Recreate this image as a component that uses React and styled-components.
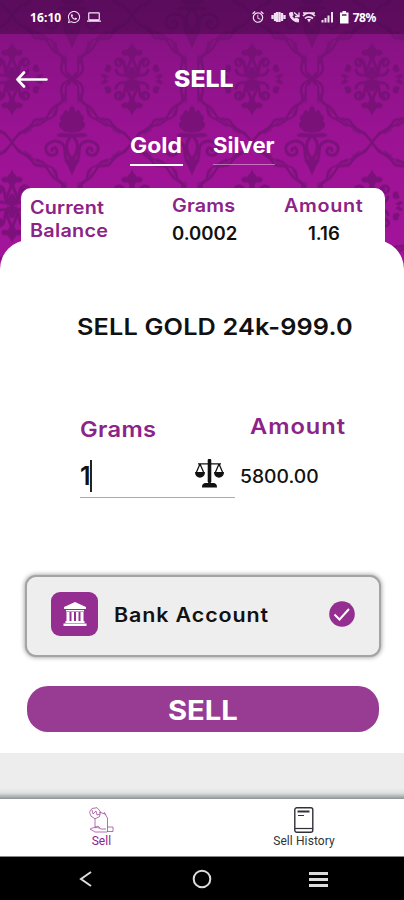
import React from "react";
import styled, { createGlobalStyle } from "styled-components";
import { FaWhatsapp } from "react-icons/fa";
import { MdAlarm, MdLaptop } from "react-icons/md";

const PURPLE = "#8c2387";
const BRAND = "#983b93";
const MOTIF = "#6f1070";

const GlobalStyle = createGlobalStyle`
  * { box-sizing: border-box; }
  html, body { margin: 0; background: #fff; }
  body { font-family: Inter, "Liberation Sans", sans-serif; }
`;

const Screen = styled.main`
  width: 404px;
  height: 900px;
  display: flex;
  flex-direction: column;
  overflow: hidden;
  background: #fff;
`;

const Header = styled.header`
  position: relative;
  isolation: isolate;
  height: 270px;
  flex: none;
  display: flex;
  flex-direction: column;
`;

const Damask = styled.svg`
  position: absolute;
  inset: 0;
  z-index: -1;
  display: block;
`;

const StatusBar = styled.div`
  height: 34px;
  padding: 0 28px 0 30px;
  display: flex;
  justify-content: space-between;
  align-items: center;
  color: #f5e6f5;
  background: rgba(45, 5, 50, 0.42);
`;

const StatusGroup = styled.div`
  display: flex;
  align-items: center;
  gap: ${(p) => p.$gap}px;
  svg { display: block; flex: none; }
`;

const StatusText = styled.span`
  font: 700 12px/34px "Noto Sans", sans-serif;
  letter-spacing: ${(p) => p.$track || 0}px;
  padding-top: 1px;
  color: #fff;
`;

/* Wide geometric lettering: the glyphs are stretched from the left edge. */
const Label = styled.span`
  display: block;
  white-space: nowrap;
  transform-origin: 0 50%;
  transform: scaleX(${(p) => p.$wide || 1.1});
  font-size: ${(p) => p.$size}px;
  line-height: ${(p) => p.$line || 24}px;
  font-weight: ${(p) => p.$weight || 600};
  letter-spacing: ${(p) => p.$track || 0}px;
  color: ${(p) => p.$color || "#111"};
`;

const TitleRow = styled.div`
  height: 90px;
  display: grid;
  grid-template-columns: 158px 1fr;
  align-items: center;
  padding-left: 16px;
`;

const Tabs = styled.nav`
  display: grid;
  grid-template-columns: 53px 62px;
  column-gap: 30px;
  padding-left: 130px;
  height: 64px;
`;

const Tab = styled.div`
  height: ${(p) => (p.$active ? 42 : 41)}px;
  padding-top: 10px;
  border-bottom: ${(p) => (p.$active ? "2px solid #fff" : "1px solid rgba(255,255,255,.4)")};
`;

const BalanceCard = styled.section`
  margin: 0 19px 0 21px;
  height: 60px;
  padding: 8px 0 0 9px;
  border-radius: 10px 10px 0 0;
  background: #fff;
  display: grid;
  grid-template-columns: 142px 112px 1fr;
`;

const Figure = styled.div`
  margin-top: -2px;
`;

const FigureValue = styled.div`
  padding: 4px 0 0 ${(p) => p.$indent || 0}px;
`;

const Sheet = styled.section`
  position: relative;
  z-index: 1;
  height: 513px;
  margin-top: -30px;
  flex: none;
  background: #fff;
  border-radius: 29px 29px 0 0;
  display: flex;
  flex-direction: column;
`;

const Heading = styled.div`
  padding: 75px 0 0 77px;
  height: 171px;
`;

const Fields = styled.div`
  display: grid;
  grid-template-columns: 155px 1fr;
  column-gap: 5px;
  padding-left: 80px;
  height: 164px;
`;

const Field = styled.div`
  padding: ${(p) => p.$top}px 0 0 ${(p) => p.$left || 0}px;
`;

const Entry = styled.div`
  height: 43px;
  margin-top: 14px;
  padding-right: 11px;
  display: flex;
  align-items: center;
  border-bottom: 1.5px solid #aaa;
  svg { margin-left: auto; margin-top: -6px; }
`;

const Caret = styled.i`
  width: 2px;
  height: 32px;
  margin: 0 0 0 -1px;
  background: #222;
`;

const AmountValue = styled.div`
  padding-top: 27px;
  margin-left: -10px;
`;

const BankCard = styled.div`
  height: 82px;
  margin: 0 23px 0 25px;
  padding: 0 24px 0 25px;
  display: flex;
  align-items: center;
  background: #eee;
  border: 2px solid #a3a5a5;
  border-radius: 11px;
  box-shadow: 0 0 5px rgba(0, 0, 0, 0.45);
`;

const BankTile = styled.div`
  width: 47px;
  height: 44px;
  margin: -4px 16px 0 -1px;
  display: grid;
  place-items: center;
  border-radius: 9px;
  background: #942e90;
`;

const BankName = styled.div`
  margin-top: -3px;
`;

const CheckBadge = styled.svg`
  margin: -4px 0 0 auto;
`;

const SellButton = styled.button`
  width: 352px;
  height: 46px;
  margin: 29px 0 0 27px;
  padding: 3px 0 0 141px;
  border: 0;
  border-radius: 21px;
  background: ${BRAND};
  font-family: inherit;
  text-align: left;
`;

const Gap = styled.div`
  height: 46px;
  flex: none;
  background: linear-gradient(#ededed 0 35px, #dde0e0 40px, #8d9393 46px);
`;

const BottomTabs = styled.nav`
  height: 58px;
  flex: none;
  display: grid;
  grid-template-columns: 1fr 1fr;
  background: #fff;
  border-bottom: 1px solid #888;
`;

const BottomTab = styled.div`
  display: flex;
  flex-direction: column;
  align-items: center;
  padding: 8px 0 0 ${(p) => (p.$active ? 1 : 2)}px;
  color: ${(p) => (p.$active ? PURPLE : "#333")};
  font: 400 12px/16px Roboto, sans-serif;
  letter-spacing: .1px;
  svg { display: block; }
`;

const SystemBar = styled.footer`
  flex: 1;
  background: #000;
  display: flex;
  align-items: center;
  padding: 1px 76px 0 79px;
  justify-content: space-between;
`;

const Home = styled.svg`
  margin-left: 3px;
`;

function Mirror({ children }) {
  return (
    <>
      <g>{children}</g>
      <g transform="scale(-1 1)">{children}</g>
    </>
  );
}

function Medallion({ x, y }) {
  const quarter = (
    <>
      <path d="M0-37c1 4 3 5 5 8 3-1 5 0 6 3-2 3-5 3-7 2-1 3-2 4-4 5z" fill={MOTIF} />
      <path
        d="M3-2C9-6 6-14 9-18c4-5 11 0 6 4-3 2-6-1-3-3M4-4c4 1 11 1 12-5M1-20C3-12 8-9 4-2"
        fill="none" stroke={MOTIF} strokeWidth="3" strokeLinecap="round"
      />
      <path d="M21-13c3-3 7-1 5 2 3 1 2 4-1 4-4 0-5-2-4-6zM26-4c2-2 5-1 5 1l-4 3-4-2z" fill={MOTIF} />
    </>
  );
  return (
    <g transform={`translate(${x} ${y})`}>
      <Mirror>{quarter}</Mirror>
      <g transform="scale(1 -1)"><Mirror>{quarter}</Mirror></g>
      <path d="M-2-12h4l3 7-3 5 3 5-3 7h-4l-3-7 3-5-3-5z" fill={MOTIF} />
    </g>
  );
}

function Rose({ x, y }) {
  return (
    <g transform={`translate(${x} ${y})`}>
      <Mirror>
        <path d="M0-35c2 2 4 4 3 7 3-4 6-2 6 2 3 0 4 4 2 7 3 1 3 5 0 7-3 4-7 4-11 4z" fill={MOTIF} />
        <path d="M0-7c8 0 12-2 16 2-5 3-9 1-16 2z" fill={MOTIF} />
        <path
          d="M2 22C10 19 5 9 9 4c6-7 19-2 17 6-2 7-12 6-11 0 1-4 5-3 5 0M2-3c5 6 4 13 0 20"
          fill="none" stroke={MOTIF} strokeWidth="3" strokeLinecap="round"
        />
        <path d="M0 14l3 5 5 1-4 6-4 9z" fill={MOTIF} />
      </Mirror>
    </g>
  );
}

function Lattice({ x, y }) {
  const side = (
    <g fill="none" stroke={MOTIF}>
      <path d="M60 0C52 3 49 6 49 12C51 20 52 24 45 26C38 29 38 35 34 39C27 42 24 37 20 45C15 52 7 52 0 63.500" strokeWidth="2.400" />
      <path d="M58 4C49 7 58 17 51 22C41 25 48 35 39 39C33 40 31 46 25 46C18 46 16 54 10 53C5 53 5 59 1 62" strokeWidth="1.900" />
      <path d="M52 14l1 10M44 28l-2 9M31 40l-7 6M19 49l-8 5" strokeWidth="5" opacity=".55" />
      <path d="M56-5l4 5M56 5l4-5" strokeWidth="3" />
    </g>
  );
  return (
    <g transform={`translate(${x} ${y})`}>
      <Mirror>{side}</Mirror>
      <g transform="scale(1 -1)"><Mirror>{side}</Mirror></g>
    </g>
  );
}

function Background() {
  return (
    <Damask width="404" height="270" viewBox="0 0 404 270">
      <defs>
        <linearGradient id="wash" x1="0" y1="0" x2="0" y2="1">
          <stop offset="0" stopColor="#7d127a" />
          <stop offset=".25" stopColor="#8f128a" />
          <stop offset=".6" stopColor="#9e1396" />
          <stop offset="1" stopColor="#a3149a" />
        </linearGradient>
        <pattern id="damask" width="120" height="127" patternUnits="userSpaceOnUse" patternTransform="translate(12 15.500)">
          <Medallion x={0} y={63.5} />
          <Medallion x={120} y={63.5} />
          <Rose x={60} y={-2} />
          <Rose x={60} y={125} />
          <Lattice x={0} y={63.5} />
          <Lattice x={120} y={63.5} />
        </pattern>
      </defs>
      <rect width="404" height="270" fill="url(#wash)" />
      <rect width="404" height="270" fill="url(#damask)" opacity=".72" />
    </Damask>
  );
}

function StatusIcons() {
  return (
    <svg width="88" height="16" viewBox="0 0 88 16" fill="none" stroke="#f0dff0">
      <path d="M10 4v8M12 3v10M14.500 3v10M17 4v8M7.500 6v4M19.500 6v4" strokeWidth="2.300" />
      <path d="M24.500 4c0 5 4 9 9 9v-3l-3-1-1 1c-1-.6-2-1.500-2.500-2.700l1-1-.7-3z" fill="#f0dff0" stroke="#f0dff0" />
      <path d="M29 3.500l5 4M34 3.500v4h-4" strokeWidth="1.300" />
      <path d="M38 7c3.500-4 8.500-4 12 0M40 9.500c2-2.300 5.500-2.300 8 0M38 4h12" strokeWidth="1.700" />
      <path d="M42 10h4l-2 3.500z" fill="#f0dff0" stroke="none" />
      <path d="M57.500 11v2.500M60.500 9v4.500M63.500 6.500v7M67 3v10.500" strokeWidth="2" />
      <path d="M75 3.500h2.500V2H81v1.500h2.500v11H75z" fill="#fff" stroke="none" />
      <path d="M77 6h4.500" stroke="#631263" strokeWidth="1.500" />
    </svg>
  );
}

function ScaleIcon() {
  return (
    <svg width="29" height="29" viewBox="0 0 29 29" fill="none" stroke="#111">
      <path d="M14.500 1.500v21" strokeWidth="3.600" strokeLinecap="round" />
      <path d="M3 4.800h23M5 5L1.500 13M5 5l3.500 8M24 5l-3.500 8M24 5l3.500 8" strokeWidth="1.300" />
      <path d="M0 13h10c0 7.500-10 7.500-10 0zM19 13h10c0 7.500-10 7.500-10 0zM7 28.500c0-5 3-4.500 7.500-4.500s7.500-.5 7.500 4.500z" fill="#111" stroke="none" />
    </svg>
  );
}

function BankIcon() {
  return (
    <svg width="24" height="24" viewBox="0 0 24 24" fill="#fff">
      <path d="M12 0L23 5v2H1V5zM3 8h18v1.500H3zM3.500 10H6.500v9H3.500zM8.500 10H11v9H8.500zM13 10h2.500v9H13zM17.500 10h3v9H17.500zM2.500 19h19v2H2.500zM.5 21.500h23V24H.5z" />
    </svg>
  );
}

function SellIcon() {
  return (
    <svg width="25" height="26" viewBox="0 0 25 26" fill="none" stroke={PURPLE} strokeWidth=".8" opacity=".8">
      <path d="M3 1.500l5-.8 3.500 4-1 5-4.500 2-4-2.500-1.500-4zM3 3l1 4 3-3 1 4 3-1M6 11.500V21M10 5l6 2 2.500 4v14M15 5l2 3M1 22c4-2 8-2 11 0h5M1 22l5 3h12M6 20c2-1 4-1 5 1M18 20h6v4.500h-6" />
    </svg>
  );
}

function HistoryIcon() {
  return (
    <svg width="20" height="26" viewBox="0 0 20 26" fill="none" stroke="#30303a">
      <rect x=".8" y=".8" width="18" height="24.500" rx="2" strokeWidth="1.400" />
      <path d="M1 21.500h18" strokeWidth="1.200" />
      <path d="M3.500 4.500h12" strokeWidth="2" />
      <path d="M4 8.500h6" strokeWidth="1" />
    </svg>
  );
}

export default function App() {
  return (
    <>
      <GlobalStyle />
      <Screen>
        <Header>
          <Background />
          <StatusBar>
            <StatusGroup $gap={6}>
              <StatusText $track={0.1}>16:10</StatusText>
              <FaWhatsapp size={14} />
              <MdLaptop size={14} />
            </StatusGroup>
            <StatusGroup $gap={0}>
              <MdAlarm size={14} />
              <StatusIcons />
              <StatusText $track={-0.4}>78%</StatusText>
            </StatusGroup>
          </StatusBar>
          <TitleRow>
            <svg width="32" height="17" viewBox="0 0 32 17" fill="none" stroke="#fff" strokeWidth="2.600" strokeLinecap="round" strokeLinejoin="round">
              <path d="M8 1.500L1.500 8.500 8 15.500M2 8.500h28.500" />
            </svg>
            <Label $size={23} $weight={800} $color="#fff" $wide={1.08}>SELL</Label>
          </TitleRow>
          <Tabs>
            <Tab $active><Label $size={21} $weight={700} $color="#fff" $wide={1.09}>Gold</Label></Tab>
            <Tab><Label $size={21} $weight={700} $color="#fff" $wide={1.05}>Silver</Label></Tab>
          </Tabs>
          <BalanceCard>
            <div>
              <Label $size={18} $line={23} $color={PURPLE} $track={0.15}>Current</Label>
              <Label $size={18} $line={23} $color={PURPLE} $track={0.25}>Balance</Label>
            </div>
            <Figure>
              <Label $size={18} $color={PURPLE} $track={0.15}>Grams</Label>
              <FigureValue><Label $size={18} $wide={1.03}>0.0002</Label></FigureValue>
            </Figure>
            <Figure>
              <Label $size={18} $color={PURPLE} $track={0.6}>Amount</Label>
              <FigureValue $indent={24}><Label $size={18} $wide={1.03}>1.16</Label></FigureValue>
            </Figure>
          </BalanceCard>
        </Header>
        <Sheet>
          <Heading><Label $size={23} $track={0.13}>SELL GOLD 24k-999.0</Label></Heading>
          <Fields>
            <Field $top={6}>
              <Label $size={21.5} $color={PURPLE} $track={0.3}>Grams</Label>
              <Entry>
                <Label $size={25} $wide={1}>1</Label>
                <Caret />
                <ScaleIcon />
              </Entry>
            </Field>
            <Field $top={3} $left={10}>
              <Label $size={21.5} $color={PURPLE} $track={0.9}>Amount</Label>
              <AmountValue><Label $size={18} $weight={500} $wide={1.07}>5800.00</Label></AmountValue>
            </Field>
          </Fields>
          <BankCard>
            <BankTile><BankIcon /></BankTile>
            <BankName><Label $size={19.5} $track={0.8}>Bank Account</Label></BankName>
            <CheckBadge width="26" height="26" viewBox="0 0 26 26">
              <circle cx="13" cy="13" r="12.800" fill="#942e90" />
              <path d="M5.500 13.500l5 5L20 8" fill="none" stroke="#fff" strokeWidth="2" />
            </CheckBadge>
          </BankCard>
          <SellButton>
            <Label $size={27} $weight={700} $color="#fff" $wide={1.08}>SELL</Label>
          </SellButton>
        </Sheet>
        <Gap />
        <BottomTabs>
          <BottomTab $active><SellIcon />Sell</BottomTab>
          <BottomTab><HistoryIcon />Sell History</BottomTab>
        </BottomTabs>
        <SystemBar>
          <svg width="13" height="16" viewBox="0 0 13 16" fill="none" stroke="#ddd" strokeWidth="2"><path d="M12 1L2 8l10 7" /></svg>
          <Home width="20" height="20" viewBox="0 0 20 20" fill="none" stroke="#ddd" strokeWidth="2"><circle cx="10" cy="10" r="8.300" /></Home>
          <svg width="19" height="15" viewBox="0 0 19 15" fill="none" stroke="#ddd" strokeWidth="2.800"><path d="M0 1.500h19M0 7.500h19M0 13.500h19" /></svg>
        </SystemBar>
      </Screen>
    </>
  );
}
